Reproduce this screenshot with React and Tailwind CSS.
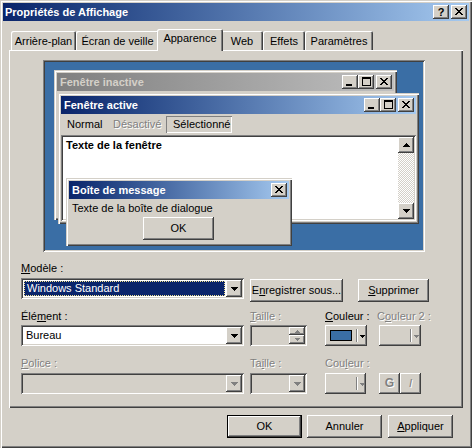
import React from "react";

// classic win2000 bevels
const RAISED = "shadow-[inset_-1px_-1px_0_#404040,inset_1px_1px_0_#ffffff,inset_-2px_-2px_0_#808080]";
const SUNKEN = "shadow-[inset_1px_1px_0_#808080,inset_-1px_-1px_0_#ffffff,inset_2px_2px_0_#404040,inset_-2px_-2px_0_#d4d0c8]";
const FRAME = "shadow-[inset_1px_1px_0_#d4d0c8,inset_2px_2px_0_#ffffff,inset_-1px_-1px_0_#404040,inset_-2px_-2px_0_#808080]";
const PANEL = "shadow-[inset_1px_1px_0_#ffffff,inset_-1px_-1px_0_#404040,inset_-2px_-2px_0_#808080]";
const THIN_SUNKEN = "shadow-[inset_1px_1px_0_#808080,inset_-1px_-1px_0_#ffffff]";
const DIS = "text-[#808080] [text-shadow:1px_1px_0_#ffffff]";

const CLOSE = ["XX....XX", ".XX..XX.", "..XXXX..", "...XX...", "..XXXX..", ".XX..XX.", "XX....XX"];
const MIN = ["XXXXXX", "XXXXXX"];
const MAX = ["XXXXXXXXX", "XXXXXXXXX", "X.......X", "X.......X", "X.......X", "X.......X", "X.......X", "X.......X", "XXXXXXXXX"];
const DOWN = ["XXXXXXX", ".XXXXX.", "..XXX..", "...X..."];
const UP = ["...X...", "..XXX..", ".XXXXX.", "XXXXXXX"];
const SMALL_DOWN = ["XXXXX", ".XXX.", "..X.."];
const TINY_UP = ["..X..", ".XXX.", "XXXXX"];
const TINY_DOWN = ["XXXXX", ".XXX.", "..X.."];

function Pix({ rows, color = "#000000" }) {
  return (
    <svg width={rows[0].length} height={rows.length} shapeRendering="crispEdges" className="block">
      {rows.flatMap((r, y) =>
        [...r].map((c, x) =>
          c === "X" ? <rect key={x + "-" + y} x={x} y={y} width="1" height="1" fill={color} /> : null
        )
      )}
    </svg>
  );
}

function CapBtn({ children, className = "" }) {
  return (
    <div className={`w-[16px] h-[14px] shrink-0 bg-[#d4d0c8] flex justify-center ${RAISED} ${className}`}>
      {children}
    </div>
  );
}

function CapButtons({ only }) {
  if (only) {
    return (
      <CapBtn className="items-start pt-[3px]">
        <Pix rows={CLOSE} />
      </CapBtn>
    );
  }
  return (
    <div className="ml-auto flex items-center">
      <CapBtn className="items-end pb-[3px] pr-[2px]">
        <Pix rows={MIN} />
      </CapBtn>
      <CapBtn className="items-start pt-[2px]">
        <Pix rows={MAX} />
      </CapBtn>
      <CapBtn className="ml-[2px] items-start pt-[3px]">
        <Pix rows={CLOSE} />
      </CapBtn>
    </div>
  );
}

function Button({ className = "", children }) {
  return (
    <div className={`bg-[#d4d0c8] flex items-center justify-center ${RAISED} ${className}`}>{children}</div>
  );
}

function DropBtn({ disabled }) {
  return (
    <div className={`w-[16px] h-[17px] shrink-0 bg-[#d4d0c8] flex items-center justify-center ${RAISED}`}>
      <Pix rows={DOWN} color={disabled ? "#808080" : "#000000"} />
    </div>
  );
}

function ColorBtn({ className = "", swatch, disabled }) {
  return (
    <div className={`h-[21px] bg-[#d4d0c8] flex items-center ${RAISED} ${className}`}>
      <div className="w-[31px] flex justify-center">
        {swatch && <div className="w-[22px] h-[11px] border border-black bg-[#3a6ea5]" />}
      </div>
      <div className="w-[2px] h-[13px] border-l border-[#808080] border-r border-r-white" />
      <div className="ml-[2px] pt-[1px]">
        <Pix rows={SMALL_DOWN} color={disabled ? "#808080" : "#000000"} />
      </div>
    </div>
  );
}

function Tab({ w, selected, children }) {
  return (
    <div
      className={`${w} flex items-center justify-center bg-[#d4d0c8] shadow-[inset_1px_1px_0_#ffffff,inset_-1px_0_0_#404040,inset_-2px_0_0_#808080] rounded-tl-[2px] rounded-tr-[2px] ${
        selected ? "h-[22px] -mx-[2px] -mb-[1px] pb-[4px] relative z-10" : "h-[19px] pt-[1px]"
      }`}
    >
      {children}
    </div>
  );
}

function Desktop() {
  return (
    <div className={`ml-[34px] w-[382px] h-[192px] p-[2px] ${SUNKEN}`}>
      <div className="relative w-full h-full bg-[#3a6ea5] overflow-hidden">
        {/* inactive window */}
        <div className={`absolute left-[9px] top-[8px] w-[343px] h-[150px] bg-[#d4d0c8] p-[3px] ${FRAME}`}>
          <div className="h-[18px] flex items-center pl-[3px] pr-[2px] bg-linear-to-r from-[#808080] to-[#c0c0c0]">
            <span className="font-bold text-[#d4d0c8]">Fenêtre inactive</span>
            <CapButtons />
          </div>
        </div>
        {/* active window */}
        <div className={`absolute left-[13px] top-[31px] w-[361px] h-[131px] bg-[#d4d0c8] p-[3px] flex flex-col ${FRAME}`}>
          <div className="h-[18px] shrink-0 flex items-center pl-[3px] pr-[2px] bg-linear-to-r from-[#0a246a] to-[#a6caf0]">
            <span className="font-bold text-white">Fenêtre active</span>
            <CapButtons />
          </div>
          <div className="h-[21px] shrink-0 flex items-start pt-[2px]">
            <div className="w-[46px] h-[17px] pl-[6px] flex items-center">Normal</div>
            <div className={`w-[59px] h-[17px] pl-[6px] flex items-center ${DIS}`}>Désactivé</div>
            <div className={`w-[66px] h-[17px] pl-[7px] flex items-center ${THIN_SUNKEN}`}>Sélectionné</div>
          </div>
          <div className={`flex-1 p-[2px] flex ${SUNKEN}`}>
            <div className="flex-1 bg-white pl-[3px] pt-[2px] font-bold">Texte de la fenêtre</div>
            <div className="w-[16px] flex flex-col justify-between bg-[repeating-conic-gradient(#ffffff_0_25%,#d4d0c8_0_50%)] bg-[length:2px_2px]">
              <div className={`h-[16px] bg-[#d4d0c8] flex items-center justify-center ${RAISED}`}>
                <Pix rows={UP} />
              </div>
              <div className={`h-[16px] bg-[#d4d0c8] flex items-center justify-center ${RAISED}`}>
                <Pix rows={DOWN} />
              </div>
            </div>
          </div>
        </div>
        {/* message box */}
        <div className={`absolute left-[21px] top-[116px] w-[226px] h-[68px] bg-[#d4d0c8] p-[3px] flex flex-col ${FRAME}`}>
          <div className="h-[18px] shrink-0 flex items-center pl-[3px] pr-[2px] bg-linear-to-r from-[#0a246a] to-[#a6caf0]">
            <span className="font-bold text-white">Boîte de message</span>
            <div className="ml-auto">
              <CapButtons only />
            </div>
          </div>
          <div className="pl-[3px] pt-[3px] h-[18px]">Texte de la boîte de dialogue</div>
          <Button className="ml-[74px] w-[71px] h-[23px]">OK</Button>
        </div>
      </div>
    </div>
  );
}

export default function App() {
  return (
    <div
      className={`w-[472px] h-[448px] bg-[#d4d0c8] p-[3px] font-['Liberation_Sans',Arial,sans-serif] text-[11px] leading-[13px] text-black overflow-hidden ${FRAME}`}
    >
      {/* title bar */}
      <div className="h-[18px] flex items-center pl-[2px] pr-[2px] bg-linear-to-r from-[#0a246a] to-[#a6caf0]">
        <span className="font-bold text-white text-[11px]">Propriétés de Affichage</span>
        <div className="ml-auto flex items-center gap-[2px]">
          <CapBtn className="items-center">
            <span className="font-bold text-[11px] leading-[11px]">?</span>
          </CapBtn>
          <CapBtn className="items-start pt-[3px]">
            <Pix rows={CLOSE} />
          </CapBtn>
        </div>
      </div>

      {/* tabs */}
      <div className="ml-[6px] mt-[8px] h-[21px] flex items-end pl-[2px] relative z-10">
        <Tab w="w-[65px]">Arrière-plan</Tab>
        <Tab w="w-[83px]">Écran de veille</Tab>
        <Tab w="w-[66px]" selected>
          Apparence
        </Tab>
        <Tab w="w-[42px]">Web</Tab>
        <Tab w="w-[42px]">Effets</Tab>
        <Tab w="w-[68px]">Paramètres</Tab>
      </div>

      {/* tab panel */}
      <div className={`ml-[6px] w-[454px] h-[358px] pt-[10px] ${PANEL}`}>
        <Desktop />

        <div className="ml-[12px] mt-[10px]">
          <div className="h-[13px]">
            <u>M</u>odèle :
          </div>
          <div className="mt-[3px] h-[24px] flex items-start">
            <div className={`w-[223px] h-[21px] p-[2px] bg-white flex ${SUNKEN}`}>
              <div className="flex-1 p-[1px]">
                <div className="h-full bg-[#0a246a] text-white border border-dotted border-[#f0e090] pl-[2px] flex items-center">
                  Windows Standard
                </div>
              </div>
              <DropBtn />
            </div>
            <Button className="ml-[6px] mt-[1px] w-[93px] h-[23px]">
              <span>
                E<u>n</u>registrer sous...
              </span>
            </Button>
            <Button className="ml-[15px] mt-[1px] w-[71px] h-[23px]">
              <span>
                <u>S</u>upprimer
              </span>
            </Button>
          </div>

          {/* row 2 */}
          <div className="mt-[8px] h-[13px] grid grid-cols-[229px_75px_54px_42px]">
            <div>
              Élé<u>m</u>ent :
            </div>
            <div className={DIS}>
              <u>T</u>aille :
            </div>
            <div>
              <u>C</u>ouleur :
            </div>
            <div className={`-ml-[2px] whitespace-nowrap ${DIS}`}>
              C<u>o</u>uleur 2 :
            </div>
          </div>
          <div className="mt-[2px] grid grid-cols-[229px_75px_54px_42px]">
            <div className={`w-[223px] h-[21px] p-[2px] bg-white flex ${SUNKEN}`}>
              <div className="flex-1 pl-[3px] flex items-center">Bureau</div>
              <DropBtn />
            </div>
            <div className={`w-[57px] h-[21px] p-[2px] flex justify-end ${SUNKEN}`}>
              <div className="w-[16px] flex flex-col">
                <div className={`h-[8px] bg-[#d4d0c8] flex items-center justify-center ${RAISED}`}>
                  <Pix rows={TINY_UP} color="#808080" />
                </div>
                <div className={`h-[9px] bg-[#d4d0c8] flex items-center justify-center ${RAISED}`}>
                  <Pix rows={TINY_DOWN} color="#808080" />
                </div>
              </div>
            </div>
            <ColorBtn className="w-[42px]" swatch />
            <ColorBtn className="w-[42px]" disabled />
          </div>

          {/* row 3 */}
          <div className="mt-[11px] h-[13px] grid grid-cols-[229px_75px_54px_42px]">
            <div className={DIS}>
              <u>P</u>olice :
            </div>
            <div className={DIS}>
              Ta<u>i</u>lle :
            </div>
            <div className={DIS}>
              Cou<u>l</u>eur :
            </div>
            <div />
          </div>
          <div className="mt-[3px] grid grid-cols-[229px_75px_54px_84px]">
            <div className={`w-[223px] h-[21px] p-[2px] flex ${SUNKEN}`}>
              <div className="flex-1" />
              <DropBtn disabled />
            </div>
            <div className={`w-[57px] h-[21px] p-[2px] flex justify-end ${SUNKEN}`}>
              <DropBtn disabled />
            </div>
            <ColorBtn className="w-[41px]" disabled />
            <div className="flex">
              <Button className={`w-[21px] h-[21px] font-bold text-[12px] ${DIS}`}>G</Button>
              <Button className={`w-[21px] h-[21px] italic ${DIS}`}>I</Button>
            </div>
          </div>
        </div>
      </div>

      {/* footer */}
      <div className="mt-[7px] pr-[16px] flex justify-end">
        <div className="w-[75px] h-[23px] border border-black">
          <Button className="w-full h-full">OK</Button>
        </div>
        <Button className="ml-[5px] w-[75px] h-[23px]">Annuler</Button>
        <Button className="ml-[6px] w-[65px] h-[23px]">
          <span>
            <u>A</u>ppliquer
          </span>
        </Button>
      </div>
    </div>
  );
}
